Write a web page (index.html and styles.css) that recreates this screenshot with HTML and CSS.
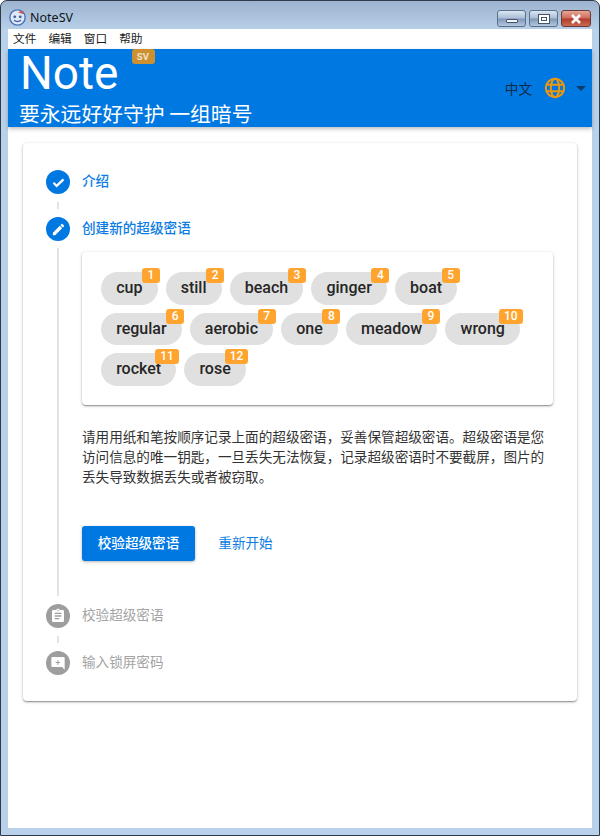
FILE: index.html
```html
<!DOCTYPE html>
<html lang="zh">
<head>
<meta charset="utf-8">
<title>NoteSV</title>
<link rel="stylesheet" href="styles.css">
</head>
<body>
<div class="window">
  <div class="titlebar">
    <svg class="app-icon" width="17" height="17" viewBox="0 0 16 16">
      <circle cx="8" cy="8" r="7.2" fill="#dfe8f6" stroke="#4a72b8" stroke-width="1.3"/>
      <circle cx="5.4" cy="7.4" r="1.3" fill="#3f5fa0"/>
      <circle cx="10.6" cy="7.4" r="1.3" fill="#3f5fa0"/>
      <path d="M4.6 10.6q3.4 2.4 6.8 0" fill="none" stroke="#3f5fa0" stroke-width="1.1"/>
      <path d="M8.6 3.4q2.4-2.6 5-.8l-.6 2z" fill="#d8504a"/>
    </svg>
    <span class="app-name">NoteSV</span>
    <div class="controls">
      <div class="ctl ctl-min"><span class="glyph-min"></span></div>
      <div class="ctl ctl-max"><span class="glyph-max"></span></div>
      <div class="ctl ctl-close">
        <svg width="14" height="10" viewBox="0 0 14 10"><path d="M3 1l8 8M11 1l-8 8" stroke="#fff" stroke-width="2.6" fill="none"/></svg>
      </div>
    </div>
  </div>
  <div class="client">
    <nav class="menu"><span>文件</span><span>编辑</span><span>窗口</span><span>帮助</span></nav>
    <header class="hero">
      <div class="brand">
        <div class="logo-row"><span class="logo">Note</span><span class="sv">SV</span></div>
        <div class="tagline">要永远好好守护 一组暗号</div>
      </div>
      <div class="lang">
        <span class="lang-name">中文</span>
        <svg class="globe" width="22" height="22" viewBox="0 0 24 24" fill="none" stroke="#f0960e" stroke-width="2.2">
          <circle cx="12" cy="12" r="10"/>
          <ellipse cx="12" cy="12" rx="4.6" ry="10"/>
          <path d="M2.6 8.5h18.8M2.6 15.5h18.8"/>
        </svg>
        <span class="caret"></span>
      </div>
    </header>
    <main class="main">
      <section class="card">
        <div class="step done">
          <span class="dot">
            <svg width="15" height="15" viewBox="0 0 24 24"><path d="M4 12.5l5 5L20 7" fill="none" stroke="#fff" stroke-width="3.6"/></svg>
          </span>
          <span class="label">介绍</span>
        </div>
        <div class="link"></div>
        <div class="step done">
          <span class="dot">
            <svg width="15" height="15" viewBox="0 0 24 24"><path d="M3 17.25V21h3.75L17.81 9.94l-3.75-3.75L3 17.25zM20.71 7.04a1 1 0 0 0 0-1.41l-2.34-2.34a1 1 0 0 0-1.41 0l-1.83 1.83 3.75 3.75 1.83-1.83z" fill="#fff"/></svg>
          </span>
          <span class="label">创建新的超级密语</span>
        </div>
        <div class="panel">
          <div class="rail"></div>
          <div class="panel-body">
            <div class="paper">
              <div class="chip">cup<b class="num">1</b></div>
              <div class="chip">still<b class="num">2</b></div>
              <div class="chip">beach<b class="num">3</b></div>
              <div class="chip">ginger<b class="num">4</b></div>
              <div class="chip">boat<b class="num">5</b></div>
              <div class="chip">regular<b class="num">6</b></div>
              <div class="chip">aerobic<b class="num">7</b></div>
              <div class="chip">one<b class="num">8</b></div>
              <div class="chip">meadow<b class="num">9</b></div>
              <div class="chip">wrong<b class="num">10</b></div>
              <div class="chip">rocket<b class="num">11</b></div>
              <div class="chip">rose<b class="num">12</b></div>
            </div>
            <p class="note">请用用纸和笔按顺序记录上面的超级密语，妥善保管超级密语。超级密语是您访问信息的唯一钥匙，一旦丢失无法恢复，记录超级密语时不要截屏，图片的丢失导致数据丢失或者被窃取。</p>
            <div class="actions">
              <button class="btn-primary">校验超级密语</button>
              <button class="btn-text">重新开始</button>
            </div>
          </div>
        </div>
        <div class="step todo">
          <span class="dot">
            <svg width="16" height="16" viewBox="0 0 24 24"><path d="M19 3h-4.18C14.4 1.84 13.3 1 12 1s-2.4.84-2.82 2H5a2 2 0 0 0-2 2v14a2 2 0 0 0 2 2h14a2 2 0 0 0 2-2V5a2 2 0 0 0-2-2zm-7 0a1 1 0 1 1 0 2 1 1 0 0 1 0-2zm2 14H7v-2h7v2zm3-4H7v-2h10v2zm0-4H7V7h10v2z" fill="#fff"/></svg>
          </span>
          <span class="label">校验超级密语</span>
        </div>
        <div class="link"></div>
        <div class="step todo">
          <span class="dot">
            <svg width="16" height="16" viewBox="0 0 24 24"><path fill-rule="evenodd" d="M4 3h16a2 2 0 0 1 2 2v17l-4-4H4a2 2 0 0 1-2-2V5a2 2 0 0 1 2-2zm7 5v2.5H8.5v1.6H11v2.4h1.6v-2.4H15v-1.6h-2.4V8z" fill="#fff"/></svg>
          </span>
          <span class="label">输入锁屏密码</span>
        </div>
      </section>
    </main>
  </div>
</div>
</body>
</html>
```
FILE: styles.css
```css
* { box-sizing: border-box; }
html, body { margin: 0; padding: 0; }
body { width: 600px; height: 836px; overflow: hidden; font-family: Roboto, "Noto Sans CJK SC", sans-serif; }

.window {
  width: 600px; height: 836px; display: flex; flex-direction: column;
  padding: 0 7px 7px;
  border: 1px solid #2c3a4a; border-radius: 7px 7px 0 0;
  background: linear-gradient(180deg, #9db3cf 0, #b9d1ea 30px, #b9d1ea 100%);
}
.titlebar { height: 28px; flex: none; display: flex; align-items: center; padding-top: 5px; }
.app-icon { margin: 0 4px 0 1px; }
.app-name { font: 12.5px "Noto Sans", "Open Sans", sans-serif; color: #101418; }
.controls { margin-left: auto; display: flex; gap: 3px; align-self: flex-start; padding-top: 4px; margin-right: 1px; }
.ctl {
  height: 17px; width: 29px; display: flex; align-items: center; justify-content: center;
  border: 1px solid #5a6f8c; border-radius: 3px;
  background: linear-gradient(180deg, #dbe6f2 0, #a9bdd6 48%, #7f97b6 52%, #b4c8de 100%);
}
.ctl-close { width: 30px; background: linear-gradient(180deg, #e6a697 0, #cf6a58 48%, #b03a2a 52%, #cc6a50 100%); border-color: #6c3a3a; }
.glyph-min { width: 12px; height: 4px; background: #f4f6f9; border: 1px solid #44546a; border-radius: 1px; margin-top: 5px; }
.glyph-max { width: 12px; height: 10px; border: 1px solid #44546a; background: #fff; box-shadow: inset 0 0 0 2px #fff, inset 0 0 0 3px #44546a; }

.client { flex: 1; background: #fff; display: flex; flex-direction: column; min-height: 0; }
.menu { height: 20px; flex: none; display: flex; gap: 12px; align-items: center; padding: 0 0 3px 5px; font: 11.7px "Noto Sans CJK SC", sans-serif; color: #1a1a1a; }

.hero {
  height: 78px; flex: none; display: flex; justify-content: space-between; color: #fff;
  background: #0078e2; box-shadow: 0 2px 4px rgba(0,0,0,.25); padding: 0 6px 0 11px; position: relative;
}
.logo-row { display: flex; align-items: flex-start; height: 48px; }
.logo { font: 400 46px/46px Roboto, sans-serif; margin: 1px 0 0 1px; }
.sv {
  margin: 0 0 0 13px; background: #cd9030; color: #f0e3cc; font: 700 9.5px/15px Roboto, sans-serif;
  height: 15px; width: 23px; text-align: center; border-radius: 3px; letter-spacing: .3px;
}
.tagline { font: 400 20.8px/28px "Noto Sans CJK SC", sans-serif; margin-top: 2px; white-space: pre; }
.lang { display: flex; align-items: center; margin-top: 28px; height: 22px; color: #0d2a47; }
.lang-name { font: 13.6px "Noto Sans CJK SC", sans-serif; margin-right: 12px; }
.globe { margin-right: 10px; }
.caret { width: 0; height: 0; border: 5px solid transparent; border-top-color: #0b3a6d; border-bottom: 0; }

.main { flex: 1; padding: 16px 15px; min-height: 0; }
.card {
  width: 554px; background: #fff; border-radius: 4px; padding: 27px 23px 26px;
  box-shadow: 0 1px 3px rgba(0,0,0,.3), 0 1px 1px rgba(0,0,0,.14), 0 2px 1px -1px rgba(0,0,0,.12);
}
.step { display: flex; align-items: center; gap: 12px; height: 24px; font: 13.6px "Noto Sans CJK SC", sans-serif; }
.label { padding-bottom: 4px; }
.dot { width: 24px; height: 24px; border-radius: 50%; display: flex; align-items: center; justify-content: center; flex: none; }
.done .dot { background: #0078e2; }
.done .label { color: #0a7ce4; font-weight: 500; }
.todo .dot { background: #9e9e9e; }
.todo .label { color: #a3a3a3; }
.link { width: 2px; height: 7px; margin: 8px 0 8px 11px; background: #e3e3e3; }

.panel { display: flex; margin: 7px 0 8px; }
.rail { width: 2px; margin-left: 11px; flex: none; background: #e3e3e3; }
.panel-body { margin-left: 23px; padding: 4px 0 35px; flex: 1; min-width: 0; }
.paper {
  width: 471px; padding: 20px 19px 19.5px; display: flex; flex-wrap: wrap; gap: 8px; border-radius: 4px; background: #fff;
  box-shadow: 0 1px 3px rgba(0,0,0,.3), 0 1px 1px rgba(0,0,0,.14), 0 2px 1px -1px rgba(0,0,0,.12);
}
.chip {
  position: relative; height: 32.5px; padding: 0 15.15px; border-radius: 16.5px; background: #e0e0e0;
  color: #262626; font: 500 16px/32px Roboto, sans-serif;
}
.num {
  position: absolute; top: -4px; right: -2.5px; min-width: 18px; height: 15px; padding: 0 5px; border-radius: 3px;
  background: #ffa52f; color: #fff; font: 500 12px/15px Roboto, sans-serif; text-align: center;
}
.note { margin: 20.5px 0 0; font: 13.6px/20.4px "Noto Sans CJK SC", sans-serif; color: #333; }
.actions { display: flex; align-items: center; margin-top: 39.3px; gap: 7px; }
.btn-primary {
  height: 35px; width: 113px; border: 0; border-radius: 3px; background: #0078e2; color: #fff; padding: 0 0 3px;
  font: 500 13.6px "Noto Sans CJK SC", sans-serif;
  box-shadow: 0 1px 3px rgba(0,0,0,.3);
}
.btn-text { height: 35px; width: 87px; border: 0; background: none; color: #0a7ce4; padding: 0 0 3px; font: 13.6px "Noto Sans CJK SC", sans-serif; }
```
